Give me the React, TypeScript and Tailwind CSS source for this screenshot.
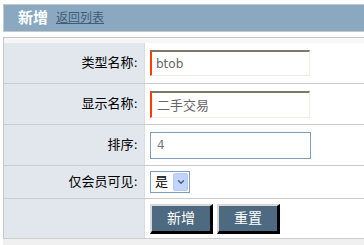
import { ChevronDown } from 'lucide-react'

const font = { fontFamily: '"DejaVu Sans", "Noto Sans CJK SC", sans-serif' }

function Row({ label, h, children }: { label: string; h: string; children: React.ReactNode }) {
  return (
    <div className={`flex border-b border-[#cccccc] ${h}`}>
      <div className="flex w-[141px] items-center justify-end border-r border-[#d8dde2] bg-[#e1e7ec] pr-[6px] text-[13px] text-black">
        {label}
      </div>
      <div className="flex flex-1 items-center pl-[5px]">{children}</div>
    </div>
  )
}

export default function App() {
  return (
    <div className="h-[245px] w-[364px] overflow-hidden bg-white" style={font}>
      <div className="ml-[3px] mt-[4px] flex h-[28px] items-center gap-[8px] border border-r-0 border-[#c8c8c8] bg-[#8aa9c1] pl-[14px]">
        <span className="text-[15px] font-bold text-white">新增</span>
        <a href="#" className="text-[12px] text-[#3f5d76] underline">
          返回列表
        </a>
      </div>

      <div className="ml-[3px] mt-[5px] border-l border-t border-[#c8c8c8]">
        <div className="h-[5px] bg-[#f6f6f6]" />
        <Row label="类型名称:" h="h-[41px]">
          <input
            readOnly
            defaultValue="btob"
            className="h-[26px] w-[160px] border-b border-l-2 border-r border-t-2 border-b-[#efefdf] border-l-[#ff3c00] border-r-[#efefdf] border-t-[#7d786a] bg-white pl-[4px] text-[12px] text-[#666666] outline-none"
          />
        </Row>
        <Row label="显示名称:" h="h-[41px]">
          <input
            readOnly
            defaultValue="二手交易"
            className="h-[27px] w-[160px] border-b border-l-2 border-r border-t-2 border-b-[#efefdf] border-l-[#ff3c00] border-r-[#efefdf] border-t-[#7d786a] bg-white pl-[5px] text-[13px] text-[#666666] outline-none"
          />
        </Row>
        <Row label="排序:" h="h-[41px]">
          <input
            readOnly
            defaultValue="4"
            className="h-[27px] w-[161px] border border-[#7f9db9] bg-white pl-[6px] text-[12px] text-[#777777] outline-none"
          />
        </Row>
        <Row label="仅会员可见:" h="h-[33px]">
          <div className="flex h-[22px] w-[40px] items-center border border-[#7f9db9] bg-white pl-[4px] pr-[1px]">
            <span className="flex-1 text-[13px] text-black">是</span>
            <span className="flex h-[18px] w-[15px] items-center justify-center rounded-[2px] border border-[#b5c8f0] bg-[#c3d4fc]">
              <ChevronDown className="h-[10px] w-[10px] text-[#4d6185]" strokeWidth={3.5} />
            </span>
          </div>
        </Row>
        <div className="flex h-[39px]">
          <div className="w-[141px] border-r border-[#d8dde2] bg-[#e1e7ec]" />
          <div className="flex flex-1 items-center gap-[4px] pl-[5px]">
            <button className="h-[30px] w-[63px] border-b-[3px] border-l-2 border-r-[3px] border-t-2 border-b-black border-l-[#d8d8d8] border-r-black border-t-[#d8d8d8] bg-[#4e6a80] text-[14px] text-white">
              新增
            </button>
            <button className="h-[30px] w-[63px] border-b-[3px] border-l-2 border-r-[3px] border-t-2 border-b-black border-l-[#d8d8d8] border-r-black border-t-[#d8d8d8] bg-[#4e6a80] text-[14px] text-white">
              重置
            </button>
          </div>
        </div>
      </div>
      <div className="ml-[3px] h-[10px] border-t border-[#cccccc] bg-[#f0f0f0]" />
    </div>
  )
}
